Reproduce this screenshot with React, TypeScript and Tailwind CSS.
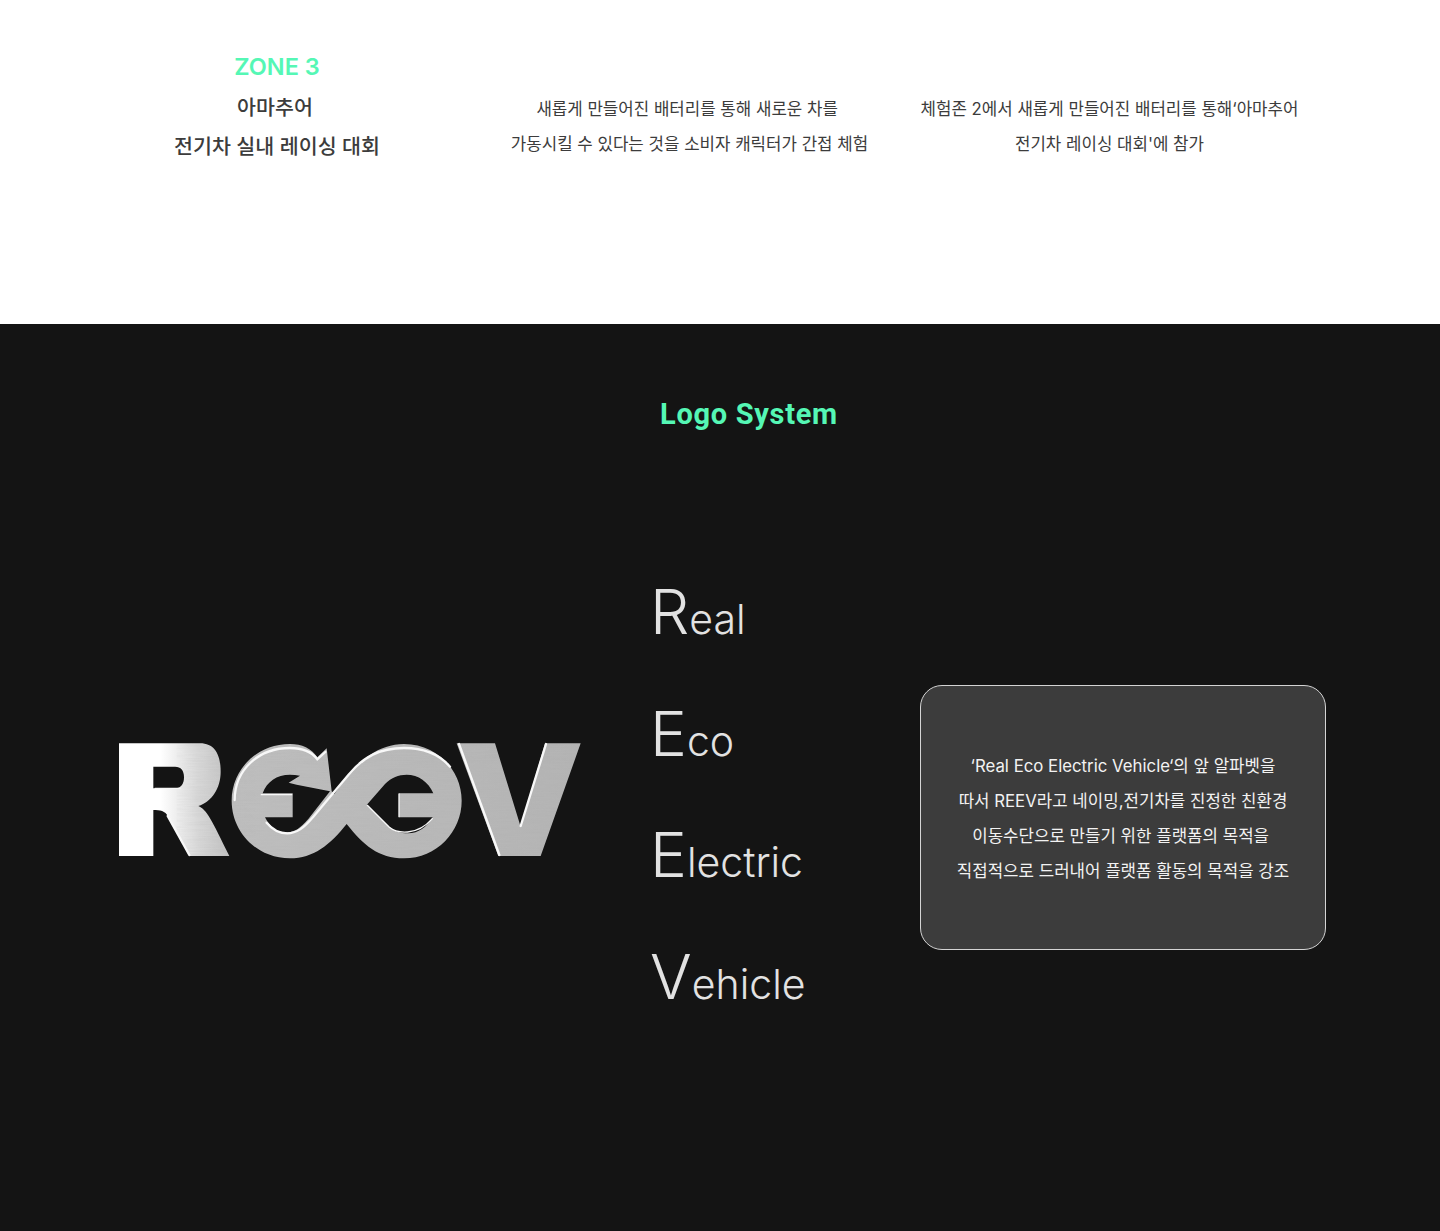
import React from 'react';

const KR = "font-['Inter','Noto_Sans_CJK_KR',sans-serif]";

function ReevLogo() {
  // viewBox matches a 3x blow-up of the 500x160 logo area
  return (
    <svg viewBox="0 0 1500 480" className="w-[500px] h-[160px] block shrink-0">
      <defs>
        <linearGradient id="metal" x1="57" y1="0" x2="1440" y2="0" gradientUnits="userSpaceOnUse">
          <stop offset="0" stopColor="#ffffff" />
          <stop offset="0.09" stopColor="#ffffff" />
          <stop offset="0.17" stopColor="#d8d8d8" />
          <stop offset="0.25" stopColor="#bebebe" />
          <stop offset="1" stopColor="#b4b4b4" />
        </linearGradient>
        <filter id="soft" x="-5%" y="-5%" width="110%" height="110%">
          <feGaussianBlur stdDeviation="1.8" />
        </filter>
        <filter id="softer" x="-5%" y="-5%" width="110%" height="110%">
          <feGaussianBlur stdDeviation="1.2" />
        </filter>
        {/* brushed metal grain */}
        <filter id="grain" x="0" y="0" width="100%" height="100%">
          <feTurbulence type="fractalNoise" baseFrequency="0.012 0.25" numOctaves="2" seed="4" />
          <feColorMatrix values="0 0 0 0 0.35  0 0 0 0 0.35  0 0 0 0 0.35  1.6 0 0 0 -0.55" />
          <feComposite in2="SourceAlpha" operator="in" />
        </filter>
        <clipPath id="pastWhite">
          <rect x="230" y="0" width="1270" height="480" />
        </clipPath>
        <g id="letters" fillRule="evenodd">
          {/* R */}
          <path d="M57 70 H300 C345 70 362 105 362 155 C362 205 335 245 295 258 C320 268 335 300 388 408 H268 L205 290 C195 272 180 270 160 270 V408 H57 Z M160 140 V205 H225 C245 205 252 190 252 172 C252 152 243 140 225 140 Z" />
          {/* infinity E + reversed E */}
          <path d="M740 312 C690 375 640 415 570 415 C470 415 395 335 395 242 C395 150 470 72 570 72 C605 72 635 85 652 112 L680 85 L695 214 L703 222 C740 170 770 130 810 105 C840 84 875 72 912 72 C1010 72 1085 150 1085 242 C1085 335 1010 415 912 415 C835 415 790 375 740 312 Z M488 220 H578 V292 H495 C510 322 530 337 558 337 C585 337 600 325 625 297 L690 214 L590 194 L566 188 L600 167 C590 165 580 164 570 164 C530 164 500 185 488 220 Z M800 255 L868 320 C885 333 900 340 925 340 C955 340 980 322 998 292 H897 V220 H1000 C985 185 955 164 920 164 C895 164 875 172 855 192 Z" />
          {/* V */}
          <path d="M1070 70 H1185 L1262 320 L1335 70 H1442 L1322 408 H1195 Z" />
        </g>
      </defs>
      <use href="#letters" fill="url(#metal)" filter="url(#softer)" />
      <g clipPath="url(#pastWhite)">
        <use href="#letters" fill="#000" filter="url(#grain)" opacity="0.1" />
      </g>
      <g fill="none" stroke="#f8f8f8" strokeWidth="7" strokeLinecap="round" filter="url(#soft)">
        <path d="M500 308 C520 332 540 340 562 340 C590 340 610 325 640 290 L745 165 C790 110 840 84 912 84 C975 84 1020 105 1050 140" />
        <path d="M404 240 C404 150 475 84 570 84 C610 84 635 95 652 118 L676 96" />
        <path d="M1077 72 L1198 405" />
        <path d="M1262 318 L1338 72" />
        <path d="M203 288 L268 405" />
        <path d="M802 256 L868 322 C890 340 950 350 997 296" strokeWidth="4" />
        <path d="M484 224 H575" strokeWidth="4" />
        <path d="M897 222 V290" strokeWidth="4" />
        <path d="M165 205 H240" strokeWidth="4" />
      </g>
    </svg>
  );
}

function Word({ head, rest }: { head: string; rest: string }) {
  return (
    <div className="h-[121.7px] text-[#e2e2e2] font-['Inter',sans-serif] leading-[121.7px] whitespace-nowrap">
      <span className="text-[62px] font-[350]">{head}</span>
      <span className="text-[41px] font-[350]">{rest}</span>
    </div>
  );
}

export default function App() {
  return (
    <div className="w-[1440px] bg-white">
      <section className="h-[324px] bg-white grid grid-cols-[480px_420px_420px] pt-[47px] text-[#3c3c3c]">
        <div className={`${KR} pl-[74px] text-center`}>
          <div className="text-[23.5px] leading-[40px] font-semibold text-[#55f7b5]">ZONE 3</div>
          <div className="text-[20.6px] leading-[39px] font-medium pr-[4px] pt-[1px]">아마추어</div>
          <div className="text-[20.6px] leading-[39px] font-medium">전기차 실내 레이싱 대회</div>
        </div>
        <p className={`${KR} pt-[45px] text-center text-[16.8px] leading-[35px] -ml-[1px]`}>
          새롭게 만들어진 배터리를 통해 새로운 차를{'\u00A0'}
          <br />
          가동시킬 수 있다는 것을 소비자 캐릭터가 간접 체험
        </p>
        <p className={`${KR} pt-[45px] text-center text-[16.8px] leading-[35px] -ml-[1px]`}>
          체험존 2에서 새롭게 만들어진 배터리를 통해‘아마추어
          <br />
          전기차 레이싱 대회'에 참가
        </p>
      </section>

      <section className="h-[907px] bg-[#141414] pt-[69px]">
        <h2 className="pl-[58px] text-center text-[29px] leading-[42px] tracking-[0.7px] font-bold text-[#55f7b5] font-['Roboto',sans-serif]">
          Logo System
        </h2>
        <div className="flex items-start pl-[100px] pt-[136px]">
          <div className="pt-[149px]">
            <ReevLogo />
          </div>
          <div className="w-[320px] pl-[50px] -mt-[20px]">
            <Word head="R" rest="eal" />
            <Word head="E" rest="co" />
            <Word head="E" rest="lectric" />
            <Word head="V" rest="ehicle" />
          </div>
          <div className="mt-[114px] w-[406px] h-[265px] rounded-[22px] border border-[#d4d4d4] bg-[#3c3c3c] flex items-center justify-center">
            <p className={`${KR} pt-[2px] text-center text-[16.8px] leading-[35px] text-[#f2f2f2]`}>
              ‘Real Eco Electric Vehicle‘의 앞 알파벳을
              <br />
              따서 REEV라고 네이밍,전기차를 진정한 친환경
              <br />
              이동수단으로 만들기 위한 플랫폼의 목적을{'\u00A0'}
              <br />
              직접적으로 드러내어 플랫폼 활동의 목적을 강조
            </p>
          </div>
        </div>
      </section>
    </div>
  );
}
